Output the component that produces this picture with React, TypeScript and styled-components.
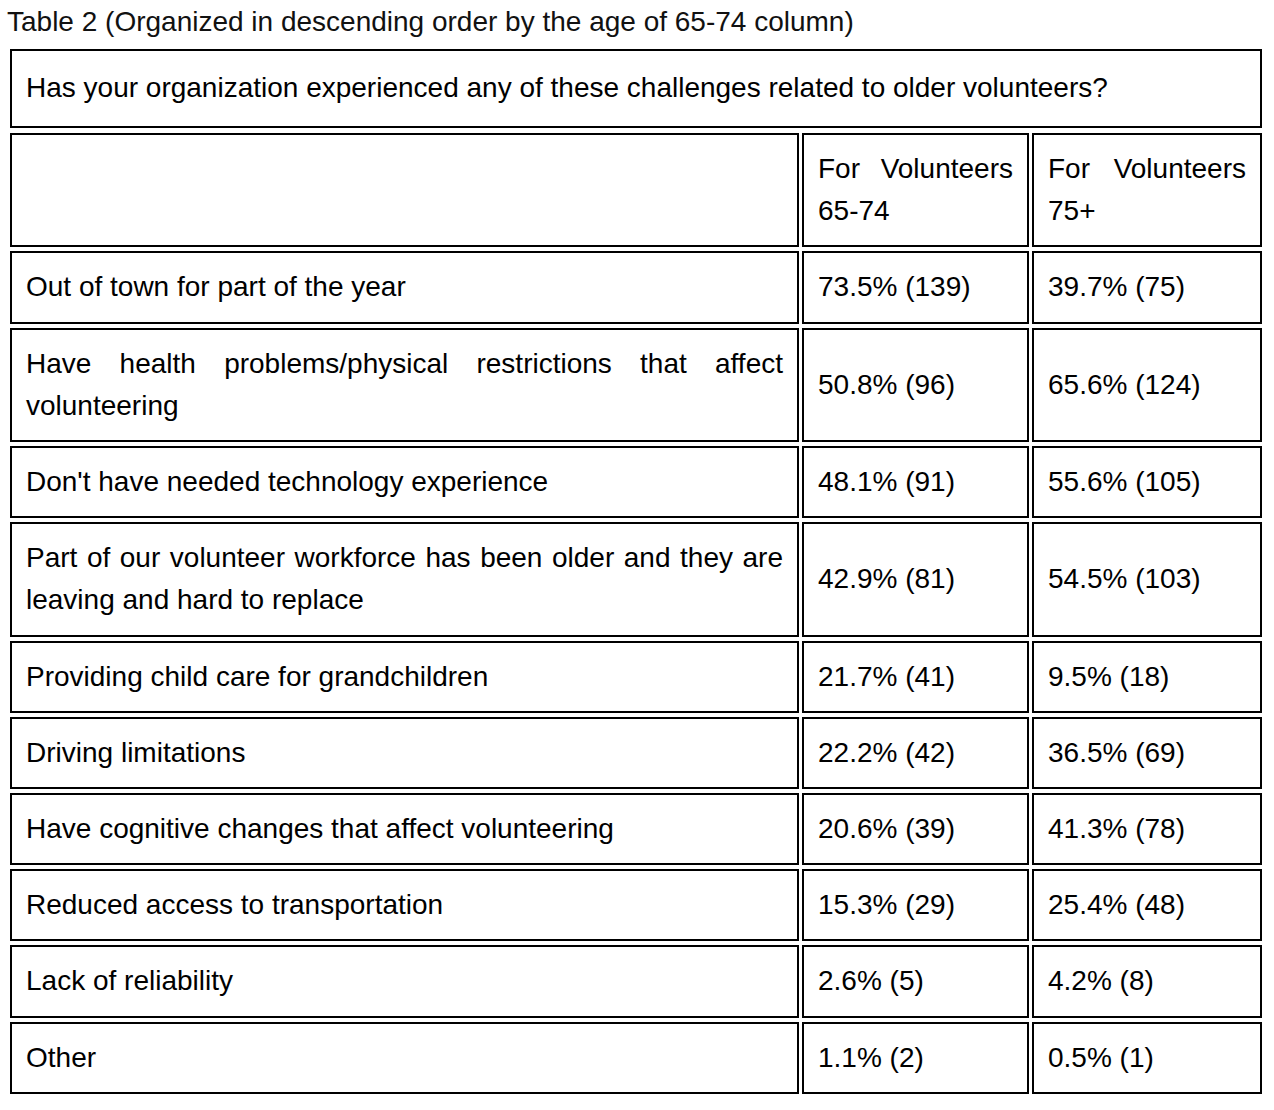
import React from "react";
import styled, { createGlobalStyle } from "styled-components";

const Global = createGlobalStyle`
  html, body { margin: 0; padding: 0; background: #fff; }
  body { font-family: "Liberation Sans", Arial, sans-serif; color: #000; }
`;

const Page = styled.div`
  width: 1274px;
  padding: 8px 0 0 0;
  box-sizing: border-box;
`;

const Caption = styled.div`
  font-size: 28px;
  line-height: 28px;
  padding-left: 7px;
  color: #111;
  margin-bottom: 13px;
  white-space: nowrap;
`;

const QuestionBox = styled.div`
  margin-left: 10px;
  width: 1252px;
  box-sizing: border-box;
  border: 2px solid #000;
  padding: 16px 14px 17px 14px;
  font-size: 28px;
  line-height: 42px;
`;

const Grid = styled.div`
  margin: 5px 0 0 10px;
  display: grid;
  grid-template-columns: 789px 227px 230px;
  column-gap: 3px;
  row-gap: 4px;
  width: 1252px;
`;

const Cell = styled.div<{ $justify?: boolean }>`
  border: 2px solid #000;
  box-sizing: border-box;
  padding: 13px 14px;
  font-size: 28px;
  line-height: 42.2px;
  text-align: ${(p) => (p.$justify ? "justify" : "left")};
  display: flex;
  align-items: center;
`;

const CellText = styled.span`
  display: block;
  width: 100%;
`;

const rows: [string, string, string][] = [
  ["Out of town for part of the year", "73.5% (139)", "39.7% (75)"],
  [
    "Have health problems/physical restrictions that affect volunteering",
    "50.8% (96)",
    "65.6% (124)",
  ],
  ["Don't have needed technology experience", "48.1% (91)", "55.6% (105)"],
  [
    "Part of our volunteer workforce has been older and they are leaving and hard to replace",
    "42.9% (81)",
    "54.5% (103)",
  ],
  ["Providing child care for grandchildren", "21.7% (41)", "9.5% (18)"],
  ["Driving limitations", "22.2% (42)", "36.5% (69)"],
  ["Have cognitive changes that affect volunteering", "20.6% (39)", "41.3% (78)"],
  ["Reduced access to transportation", "15.3% (29)", "25.4% (48)"],
  ["Lack of reliability", "2.6% (5)", "4.2% (8)"],
  ["Other", "1.1% (2)", "0.5% (1)"],
];

export default function App() {
  return (
    <Page>
      <Global />
      <Caption>Table 2 (Organized in descending order by the age of 65-74 column)</Caption>
      <QuestionBox>
        Has your organization experienced any of these challenges related to older volunteers?
      </QuestionBox>
      <Grid>
        <Cell />
        <Cell $justify>
          <CellText>For Volunteers 65-74</CellText>
        </Cell>
        <Cell $justify>
          <CellText>For Volunteers 75+</CellText>
        </Cell>
        {rows.map(([label, a, b]) => (
          <React.Fragment key={label}>
            <Cell $justify>
              <CellText>{label}</CellText>
            </Cell>
            <Cell>
              <CellText>{a}</CellText>
            </Cell>
            <Cell>
              <CellText>{b}</CellText>
            </Cell>
          </React.Fragment>
        ))}
      </Grid>
    </Page>
  );
}
